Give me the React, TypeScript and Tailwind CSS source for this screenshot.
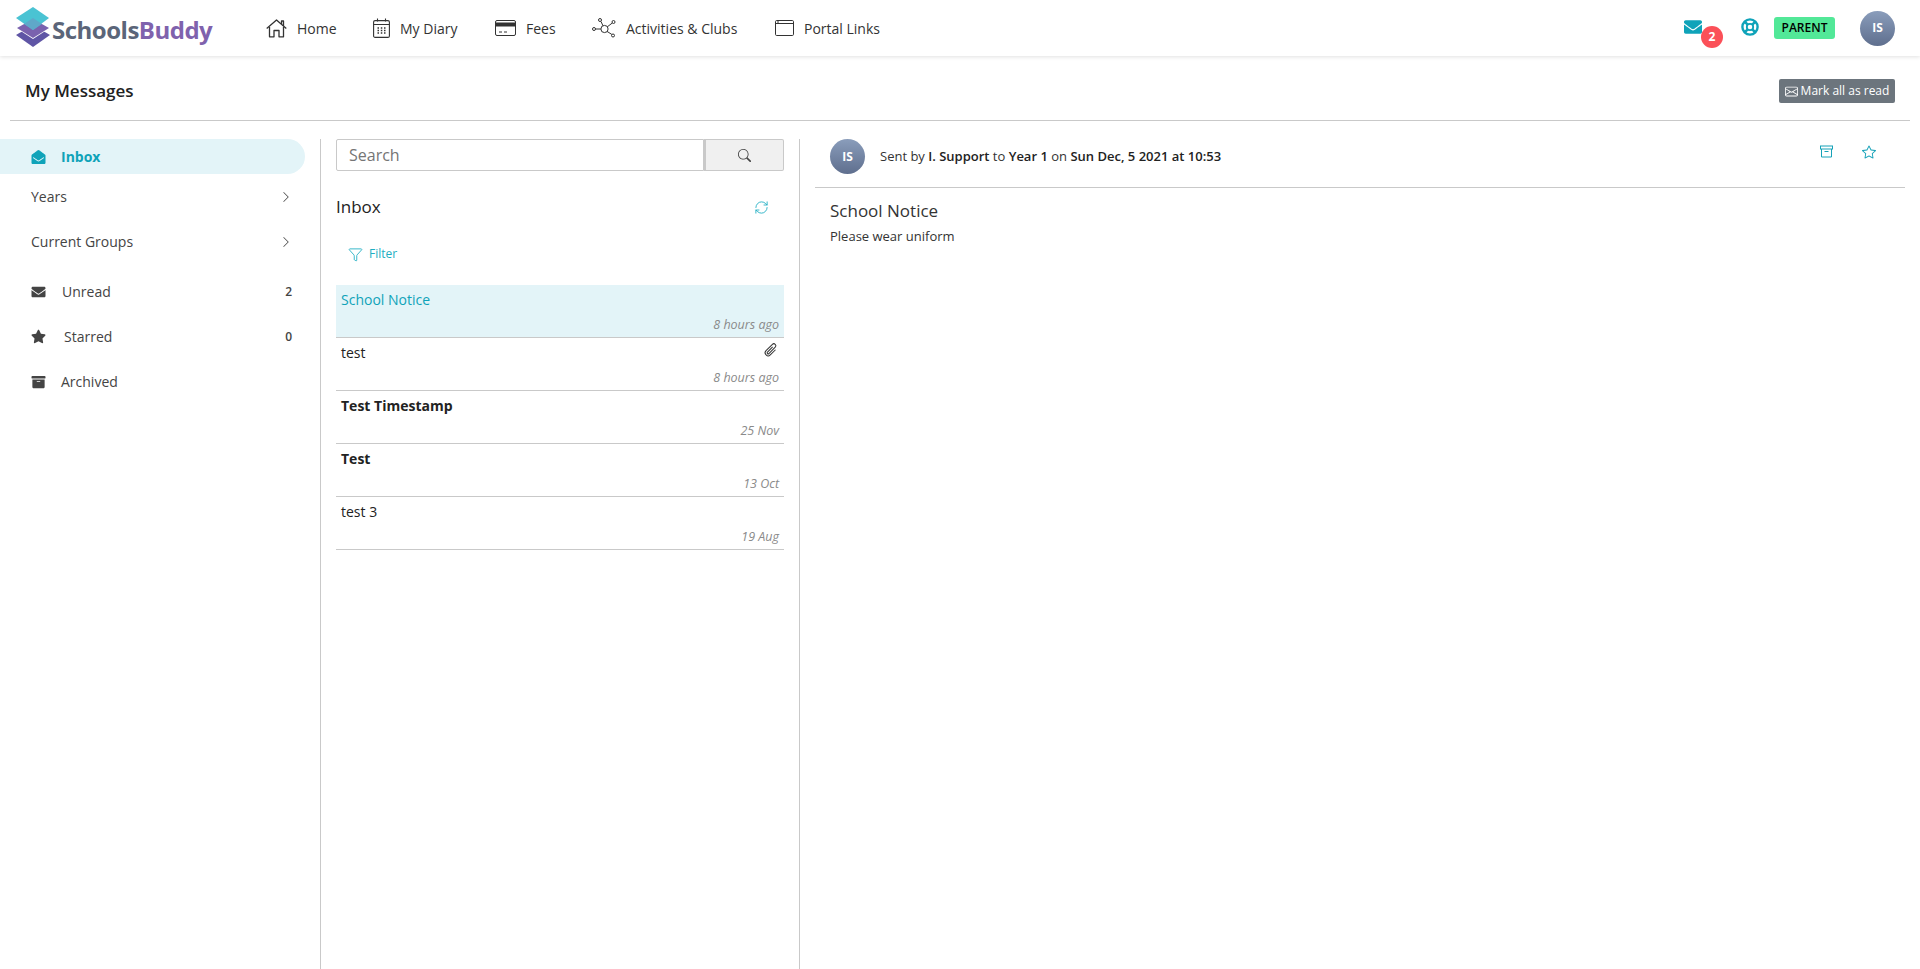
import { BsChevronRight, BsSearch, BsEnvelope, BsStar, BsPaperclip } from 'react-icons/bs';
import { FaEnvelope, FaEnvelopeOpen, FaStar, FaArchive } from 'react-icons/fa';
import { Funnel, RefreshCw } from 'lucide-react';

function Logo() {
  return (
    <div className="flex items-center w-[194px] ml-4 relative">
      <svg width="34" height="42" viewBox="0 0 34 42" className="shrink-0">
        <path d="M17 18 L34 28 L17 40 L0 28Z" fill="#5f55a5" />
        <path d="M17 11 L34 21 L17 32 L0 21Z" fill="#ffffff" />
        <path d="M17 12 L33 21 L17 31 L1 21Z" fill="#7a62ae" />
        <path d="M17 0 L33 11 L17 23 L0 11Z" fill="#4ac3d3" />
        <path d="M8 17 L17 11 L26 17 L17 23Z" fill="#5fa8c9" />
      </svg>
      <span className="text-[24px] font-bold tracking-[-0.5px] leading-none mt-[3px] ml-[2px] text-[#5b6579]">
        Schools<span className="text-[#7f62ad]">Buddy</span>
      </span>
    </div>
  );
}

function HomeIcon() {
  return (
    <svg width="21" height="19" viewBox="0 0 21 19" fill="none" stroke="#333" strokeWidth="1.3" strokeLinejoin="round">
      <path d="M0.7 9.5 L10.5 1 L20.3 9.5" />
      <path d="M15.5 5 V2 H17.5 V7" />
      <path d="M3.5 8 V17.8 H8 V11.5 H13 V17.8 H17.5 V8" />
    </svg>
  );
}

function DiaryIcon() {
  return (
    <svg width="17" height="20" viewBox="0 0 17 20" fill="none" stroke="#333" strokeWidth="1.1">
      <rect x="0.6" y="2.6" width="15.8" height="16.8" rx="1.5" />
      <path d="M0.6 6.5 H16.4 M4.5 0.5 V3.5 M12.5 0.5 V3.5" />
      <path d="M4.5 10 H6 M7.8 10 H9.3 M11 10 H12.5 M4.5 12.5 H6 M7.8 12.5 H9.3 M11 12.5 H12.5 M4.5 15 H6 M7.8 15 H9.3 M11 15 H12.5" strokeWidth="1.4" />
    </svg>
  );
}

function FeesIcon() {
  return (
    <svg width="21" height="16" viewBox="0 0 21 16" fill="none" stroke="#333" strokeWidth="1">
      <rect x="0.5" y="0.5" width="20" height="15" rx="1.5" />
      <rect x="0.5" y="3" width="20" height="3" fill="#333" />
      <path d="M4 12 H7 M9 12 H12" strokeWidth="1.2" />
    </svg>
  );
}

function ClubsIcon() {
  return (
    <svg width="24" height="20" viewBox="0 0 24 20" fill="none" stroke="#333" strokeWidth="1">
      <circle cx="12.5" cy="11" r="3.6" />
      <circle cx="8" cy="2" r="1.5" />
      <circle cx="21.5" cy="4" r="1.5" />
      <circle cx="21" cy="17.5" r="1.5" />
      <circle cx="2" cy="11" r="1.5" />
      <path d="M9 3.5 L11 7.8 M20.3 5 L15.3 8.8 M19.8 16.4 L15 13.4 M3.5 11 H8.9" />
    </svg>
  );
}

function PortalIcon() {
  return (
    <svg width="19" height="16" viewBox="0 0 19 16" fill="none" stroke="#333" strokeWidth="1">
      <rect x="0.5" y="0.5" width="18" height="15" rx="1.2" />
      <path d="M0.5 3.5 H18.5 M3 1 V3.5" />
    </svg>
  );
}

function LifeRing() {
  return (
    <svg width="18" height="18" viewBox="0 0 18 18" fill="none" stroke="#0fa3b9" className="-mt-[3px] mr-[15px]">
      <circle cx="9" cy="9" r="7.6" strokeWidth="2.4" />
      <circle cx="9" cy="9" r="3.2" strokeWidth="1.8" />
      <path d="M3.6 3.6 L6.7 6.7 M14.4 3.6 L11.3 6.7 M3.6 14.4 L6.7 11.3 M14.4 14.4 L11.3 11.3" strokeWidth="2.6" />
    </svg>
  );
}

function ArchiveLine() {
  return (
    <svg width="13" height="13" viewBox="0 0 13 13" fill="none" stroke="#17a2b8" strokeWidth="1">
      <rect x="0.5" y="1" width="12" height="3" />
      <path d="M1.5 4 V12 H11.5 V4 M4.5 6.5 H8.5" />
    </svg>
  );
}

function Avatar() {
  return (
    <div className="w-[35px] h-[35px] rounded-full bg-gradient-to-b from-[#8a9dbb] to-[#5f6f8e] flex items-center justify-center text-white text-[12px] font-bold shrink-0">
      IS
    </div>
  );
}

const navLinks = [
  { label: 'Home', icon: <HomeIcon />, w: 'w-[107px]', gap: 'gap-[10px]' },
  { label: 'My Diary', icon: <DiaryIcon />, w: 'w-[122px]', gap: 'gap-[10px]' },
  { label: 'Fees', icon: <FeesIcon />, w: 'w-[97px]', gap: 'gap-[10px]' },
  { label: 'Activities & Clubs', icon: <ClubsIcon />, w: 'w-[183px]', gap: 'gap-[10px]' },
  { label: 'Portal Links', icon: <PortalIcon />, w: 'w-auto', gap: 'gap-[10px]' },
];

function Header() {
  return (
    <header className="h-[56px] flex items-center bg-white shadow-[0_1px_4px_rgba(0,0,0,0.12)] relative">
      <Logo />
      <nav className="flex items-center ml-[56px] text-[14px] font-medium text-[#333]">
        {navLinks.map((n) => (
          <a key={n.label} className={`flex items-center ${n.w} ${n.gap}`}>
            {n.icon}
            <span>{n.label}</span>
          </a>
        ))}
      </nav>
      <div className="ml-auto flex items-center pr-[25px]">
        <div className="relative mr-[39px] -mt-[3px]">
          <FaEnvelope className="text-[#0fa3b9] text-[18px]" />
          <span className="absolute left-[17px] top-[8px] w-[22px] h-[22px] rounded-full bg-[#fb5058] text-white text-[12px] font-bold flex items-center justify-center">
            2
          </span>
        </div>
        <LifeRing />
        <span className="h-[22px] w-[61px] rounded-[3px] bg-[#52e898] text-black text-[12px] font-semibold flex items-center justify-center mr-[25px]">
          PARENT
        </span>
        <Avatar />
      </div>
    </header>
  );
}

function TitleBar() {
  return (
    <div className="h-[65px] mx-[10px] pl-[15px] pr-[15px] pt-[6px] flex items-center justify-between border-b border-[#c9c9c9]">
      <h1 className="text-[17px] font-semibold text-[#222]">My Messages</h1>
      <button className="h-[24px] w-[116px] rounded-[2px] bg-[#6c757d] text-white text-[12px] font-medium flex items-center justify-center gap-[3px]">
        <BsEnvelope className="text-[13px]" />
        Mark all as read
      </button>
    </div>
  );
}

function Sidebar() {
  return (
    <aside className="w-[321px] shrink-0 border-r border-[#c9c9c9] text-[14px] text-[#444] pr-[15px]">
      <div className="h-[35px] rounded-r-full bg-[#e3f4f8] flex items-center pl-[31px] text-[#0fa3b9] font-bold">
        <FaEnvelopeOpen className="text-[14px] w-[15px]" />
        <span className="ml-[15px]">Inbox</span>
      </div>
      <div className="h-[45px] flex items-center justify-between pl-[31px] pr-[13px]">
        <span>Years</span>
        <BsChevronRight className="text-[12px] text-[#444]" />
      </div>
      <div className="h-[45px] flex items-center justify-between pl-[31px] pr-[13px]">
        <span>Current Groups</span>
        <BsChevronRight className="text-[12px] text-[#444]" />
      </div>
      <div className="h-[45px] mt-[5px] flex items-center pl-[31px] pr-[13px]">
        <FaEnvelope className="text-[14px] w-[15px]" />
        <span className="ml-[16px]">Unread</span>
        <span className="ml-auto text-[12px] font-semibold">2</span>
      </div>
      <div className="h-[45px] flex items-center pl-[31px] pr-[13px]">
        <FaStar className="text-[15px] w-[15px]" />
        <span className="ml-[18px]">Starred</span>
        <span className="ml-auto text-[12px] font-semibold">0</span>
      </div>
      <div className="h-[45px] flex items-center pl-[31px]">
        <FaArchive className="text-[14px] w-[15px]" />
        <span className="ml-[15px]">Archived</span>
      </div>
    </aside>
  );
}

const messages = [
  { subject: 'School Notice', time: '8 hours ago', active: true },
  { subject: 'test', time: '8 hours ago', attachment: true },
  { subject: 'Test Timestamp', time: '25 Nov', unread: true },
  { subject: 'Test', time: '13 Oct', unread: true },
  { subject: 'test 3', time: '19 Aug' },
];

function MessageList() {
  return (
    <section className="w-[479px] shrink-0 border-r border-[#c9c9c9] pl-[15px] pr-[15px]">
      <div className="flex h-[32px]">
        <div className="flex-1 border border-[#c9c9c9] rounded-l-[2px] bg-white flex items-center pl-[12px] text-[16px] text-[#757575]">
          Search
        </div>
        <div className="w-[80px] border border-l-2 border-[#c9c9c9] bg-[#f0f0f0] rounded-r-[2px] flex items-center justify-center">
          <BsSearch className="text-[13px] text-[#444]" />
        </div>
      </div>
      <div className="h-[36px] mt-[18px] flex items-center justify-between">
        <h2 className="text-[17px] text-[#222]">Inbox</h2>
        <RefreshCw size={15} strokeWidth={1.4} className="text-[#1eaec2] mr-[15px]" />
      </div>
      <div className="h-[20px] mt-[19px] flex items-center pl-[12px] gap-[6px] text-[12px] text-[#1eaec2]">
        <Funnel size={15} strokeWidth={1.4} />
        <span>Filter</span>
      </div>
      <ul className="mt-[21px]">
        {messages.map((m) => (
          <li
            key={m.subject}
            className={`h-[53px] border-b border-[#c9c9c9] pl-[5px] pr-[5px] pt-[5px] flex flex-col text-[14px] ${
              m.active ? 'bg-[#e3f4f8] text-[#0fa3b9]' : 'text-[#222]'
            } ${m.unread ? 'font-bold' : ''}`}
          >
            <div className="flex justify-between items-start leading-[20px]">
              <span>{m.subject}</span>
              {m.attachment && <BsPaperclip className="text-[16px] text-[#333] rotate-45 -mt-[1px]" />}
            </div>
            <span className="mt-auto mb-[4px] self-end text-[12.5px] italic font-normal text-[#8a8a8a] leading-[16px]">
              {m.time}
            </span>
          </li>
        ))}
      </ul>
    </section>
  );
}

function MessageView() {
  return (
    <section className="flex-1 pl-[15px] pr-[15px] min-w-0">
      <div className="h-[49px] flex border-b border-[#c9c9c9]">
        <div className="flex items-start pl-[15px] flex-1">
          <Avatar />
          <p className="ml-[15px] text-[13px] leading-[35px] text-[#333]">
            Sent by <b className="font-semibold text-[#222]">I. Support</b> to{' '}
            <b className="font-semibold text-[#222]">Year 1</b> on{' '}
            <b className="font-semibold text-[#222]">Sun Dec, 5 2021 at 10:53</b>
          </p>
        </div>
        <div className="flex items-start pt-[6px] pr-[29px] gap-[29px]">
          <ArchiveLine />
          <BsStar className="text-[#17a2b8] text-[14px]" />
        </div>
      </div>
      <div className="pl-[15px]">
        <h3 className="mt-[10px] text-[17px] leading-[26px] text-[#333]">School Notice</h3>
        <p className="mt-[2px] text-[13px] leading-[20px] text-[#333]">Please wear uniform</p>
      </div>
    </section>
  );
}

export default function App() {
  return (
    <div className="h-[969px] flex flex-col bg-white overflow-hidden font-['Open_Sans',sans-serif]">
      <Header />
      <TitleBar />
      <main className="flex flex-1 mt-[18px] min-h-0">
        <Sidebar />
        <MessageList />
        <MessageView />
      </main>
    </div>
  );
}
